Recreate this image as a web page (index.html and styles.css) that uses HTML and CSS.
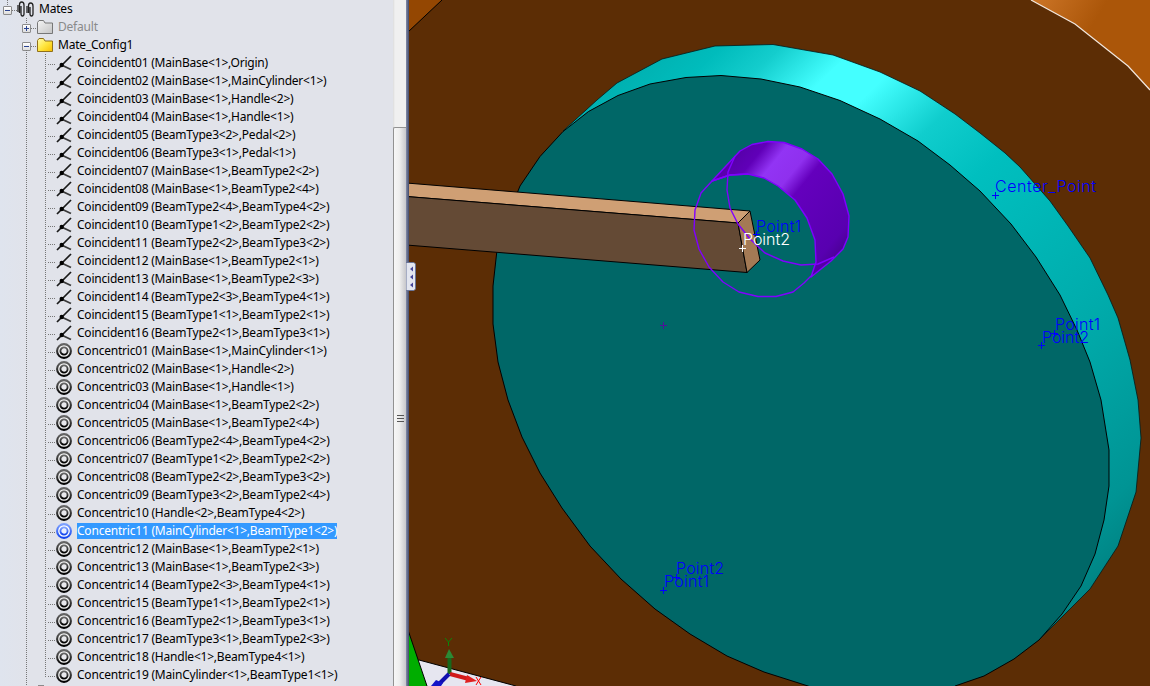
FILE: index.html
```html
<!DOCTYPE html>
<html lang="en">
<head>
<meta charset="utf-8">
<title>Mates</title>
<link rel="stylesheet" href="styles.css">
</head>
<body>
<svg class="defs" width="0" height="0">
  <defs>
    <linearGradient id="gRing" x1="0" y1="0" x2="0" y2="1"><stop offset="0" stop-color="#666"/><stop offset=".6" stop-color="#2c2c2c"/><stop offset="1" stop-color="#000"/></linearGradient>
    <linearGradient id="gBlue" x1="0" y1="0" x2="0" y2="1"><stop offset="0" stop-color="#7fa2ff"/><stop offset="1" stop-color="#1144ee"/></linearGradient>
    <linearGradient id="gYel" x1="0" y1="0" x2="1" y2="1"><stop offset="0" stop-color="#fffbb0"/><stop offset=".5" stop-color="#ffe640"/><stop offset="1" stop-color="#f7bd00"/></linearGradient>
    <linearGradient id="gGry" x1="0" y1="0" x2="1" y2="1"><stop offset="0" stop-color="#f4f4f4"/><stop offset="1" stop-color="#c4c4c4"/></linearGradient>
    <symbol id="coincident" viewBox="0 0 16 16"><path d="M1 15 15 1" stroke="#1a1a1a" stroke-width="1.700"/><path d="M5.500 10 15 14.500" stroke="#3a3a3a" stroke-width="1.900"/><circle cx="5.700" cy="10" r="2.200" fill="#000"/></symbol>
    <symbol id="concentric" viewBox="0 0 16 16"><circle cx="8" cy="8" r="6.900" fill="#f5f5f5" stroke="url(#gRing)" stroke-width="2.100"/><circle cx="8" cy="8" r="3.600" fill="#e8e8ec" stroke="url(#gRing)" stroke-width="1.900"/></symbol>
    <symbol id="concentric-on" viewBox="0 0 16 16"><circle cx="8" cy="8" r="6.900" fill="#fff" stroke="url(#gBlue)" stroke-width="2.100"/><circle cx="8" cy="8" r="3.600" fill="#e8efff" stroke="url(#gBlue)" stroke-width="1.900"/></symbol>
  </defs>
</svg>
<main class="app">
  <section class="tree" id="tree">
    <div class="row root"><i class="box"></i><i class="dots"></i>
      <svg class="clips" viewBox="0 0 17 16"><g fill="none" stroke="#222" stroke-width="1.3"><path d="M2.500 12V4q0-3 2.200-3T7 4v8.500q0 2.500-1.500 2.500T4 12.500V5"/><path d="M1 11V4"/><path d="M11.500 12V5q0-3 2.200-3T16 5v7.500q0 2.500-1.500 2.500T13 12.500V6"/><path d="M10 12V5"/></g></svg>
      <span class="label">Mates</span></div>
    <div class="row folder"><i class="box plus"></i><i class="dots"></i>
      <svg class="dir" viewBox="0 0 17 15"><path d="M.5 13.500V2.500L2 .5H6.500L8 3H15.500V13.500Z" fill="url(#gGry)" stroke="#777"/></svg>
      <span class="label muted">Default</span></div>
    <div class="row folder"><i class="box"></i><i class="dots"></i>
      <svg class="dir" viewBox="0 0 17 15"><path d="M.5 13.500V2.500L2 .5H6.500L8 3H15.500V13.500Z" fill="url(#gYel)" stroke="#90701a"/></svg>
      <span class="label">Mate_Config1</span></div>
  </section>
  <div class="splitter"><div class="thumb"><i></i><i></i><i></i></div></div>
  <section class="viewport">
    <svg class="scene" viewBox="408 0 742 686" width="742" height="686">
      <defs>
        <linearGradient id="rim" gradientUnits="userSpaceOnUse" x1="600" y1="60" x2="1115" y2="600">
          <stop offset="0" stop-color="#00aaaa"/><stop offset=".1" stop-color="#00bcbc"/><stop offset=".155" stop-color="#14cdcd"/><stop offset=".225" stop-color="#44ffff"/><stop offset=".28" stop-color="#44ffff"/><stop offset=".37" stop-color="#10cdcd"/><stop offset=".46" stop-color="#00bfbf"/><stop offset=".7" stop-color="#00abab"/><stop offset=".9" stop-color="#009494"/><stop offset="1" stop-color="#007c7c"/>
        </linearGradient>
        <linearGradient id="pin" gradientUnits="userSpaceOnUse" x1="715" y1="160" x2="850" y2="270">
          <stop offset="0" stop-color="#5000a0"/><stop offset=".17" stop-color="#6000b8"/><stop offset=".27" stop-color="#9234f4"/><stop offset=".39" stop-color="#8f30ee"/><stop offset=".48" stop-color="#6400bd"/><stop offset=".82" stop-color="#5800b0"/><stop offset="1" stop-color="#3c0078"/>
        </linearGradient>
        <linearGradient id="bronze" gradientUnits="userSpaceOnUse" x1="1040" y1="0" x2="1090" y2="30"><stop offset="0" stop-color="#c97224"/><stop offset="1" stop-color="#ab5609"/></linearGradient>
      </defs>
      <rect x="408" width="742" height="686" fill="#5c2d05"/>
      <path d="M1031 0 1075 24 1128 66 1150 90V0Z" fill="url(#bronze)"/>
      <path d="M1031 0 1075 24 1128 66 1150 90" fill="none" stroke="#f2e8e0" stroke-width="1.200"/>
      <path d="M408 0H442L408 32Z" fill="#944702"/><path d="M442 0 408 32" stroke="#000"/>
      <path d="M419 660 516 686H400Z" fill="#e6e6f0"/><path d="M419 660 516 686" stroke="#000"/>
      <path d="M408 630 427 686H408Z" fill="#00ad00"/><path d="M408 630 427 686" stroke="#000"/>
      <path d="M563 131 597 100 617 83 662 59 715 46 773 44.500 833 55 880 72 920 91 955 114 980 133 1005 153 1020 167 1050 201 1068 226 1090 258 1108 295 1118 318 1130 360 1138 400 1141 438 1136 492 1118 546 1090 589 1072 607 1039 640 900 400Z" fill="url(#rim)" stroke="#001a1a" stroke-width=".8"/>
      <path class="face" d="M518 191 520 186 540 156.500 563 131.500 588.500 111.500 618 95.500 650 84 686 77.500 721 75.500 761 79 800 87 840 100.500 880 119 918 141 950 165 980 191 1011 224 1036 257 1060 295 1077 330 1090 362 1101 400 1109 450V486L1104 520 1095 554 1081 586 1062 614 1039 640 1014 659 984 676 955 686 952 690H818L808 686 764 672 727 656 690 634 655 609 621 579 590 546 562 508 540 473 522 437 508 400 498 362 493 324V286L497 250Z"/>
      <g stroke="#000" stroke-linejoin="round">
        <path d="M400 182.500 750 211 738 223 400 196Z" fill="#cf9f74"/>
        <path d="M400 196 738 223 747 272.500 400 244.500Z" fill="#644a35"/>
        <path d="M738 223 750 211 760 260 747 272.500Z" fill="#a47a55"/>
      </g>
      <g stroke="#8000ff" stroke-width="1.400" fill="none" stroke-linejoin="round">
        <path d="M712 181 740 151 752 144.500 768 141.500 784 142.500 802 149 818 159 832 174 843 194 849 216 848 237 843 249 831 261 811 277 816 262 815 240 807 218 795 200 778 186 764 178 748 174 730 175Z" fill="url(#pin)"/>
        <path d="M748 174 730 175 712 181 701 193 695 210 694 230 699 249 709 267 723 282 739 292 758 296.500 776 296.500 793 292 804 283 811 276"/>
        <path d="M735 156 728 172 727 190 730 208 738 224 750 239 765 253 783 261 801 265 818 264 834 257"/>
      </g>
      <path class="origin" d="M660 325.500h7M663.500 322v7"/>
      <g class="blue pt">
        <path d="M992 195.500h7M995.500 192v7M1038 345.500h7M1041.500 342v7M1051 333.500h7M1054.500 330v7M673 577.500h7M676.500 574v7M660 590.500h7M663.500 587v7M753 234.500h7M756.500 231v7"/>
        <text x="995" y="192" textLength="101">Center_Point</text>
        <text x="1055" y="330" textLength="45">Point1</text><text x="1042" y="343" textLength="47">Point2</text>
        <text x="676" y="574" textLength="48">Point2</text><text x="664" y="587" textLength="45">Point1</text>
        <text x="756" y="232" textLength="45">Point1</text>
      </g>
      <g class="white pt"><path d="M739 248.500h7M742.500 245v7"/><text x="743" y="245" textLength="47">Point2</text></g>
      <g>
        <path d="M449.500 674V656" stroke="#17691c" stroke-width="4"/><path d="M449 649 454 658H445Z" fill="#2b8a35"/>
        <path d="M450 674 469 679" stroke="#d21a1a" stroke-width="4"/><path d="M467 675 477 681 465 683Z" fill="#e02020"/>
        <path d="M449 674 440 683" stroke="#1010b0" stroke-width="4"/><path d="M431 686 436 680 443 683 441 686Z" fill="#1414c8"/>
        <path d="M445 638 448.500 642V646M452 638 448.500 642" stroke="#0a850a" fill="none"/>
        <path d="M476 677 481 685M481 677 476 685" stroke="#f00"/>
      </g>
    </svg>
    <div class="handle"><svg viewBox="0 0 10 29" width="10" height="29"><path d="M0 .5H8L9.500 2V27L8 28.500H0Z" fill="#e3e6f0" stroke="#6b7597"/><path d="M4 7 7 4.500V9.500ZM4 15 7 12.500V17.500ZM4 23 7 20.500V25.500Z" fill="#45459a"/></svg></div>
  </section>
</main>
<script src="tree.js"></script>
</body>
</html>
```
FILE: styles.css
```css
* { box-sizing: border-box; }
body { margin: 0; overflow: hidden; font: 12px/16px "Noto Sans", "Open Sans", sans-serif; color: #000; }
.defs { position: absolute; }
.app { display: flex; width: 1150px; height: 686px; }
.tree { position: relative; width: 393px; height: 686px; overflow: hidden; background: linear-gradient(90deg, #dfe4ee, #e1e3ea 30px); }
.row { display: flex; align-items: center; height: 18px; padding-left: 48px; white-space: nowrap; }
.root { padding-left: 3px; }
.folder { padding-left: 22px; }
.box { position: relative; flex: none; width: 9px; height: 9px; border: 1px solid #8c8c8c; border-radius: 1px; background: linear-gradient(#fff, #ddd); margin-top: 2px; }
.box::before, .plus::after { content: ""; position: absolute; left: 1px; top: 3px; width: 5px; height: 1px; background: #2a4390; }
.plus::after { transform: rotate(90deg); }
.dots { flex: none; width: 5px; height: 1px; margin-top: 3px; background: repeating-linear-gradient(90deg, #777 0 1px, transparent 1px 2px); }
.leaf .dots { width: 8px; }
.leaf .icon { flex: none; width: 16px; height: 16px; }
.leaf .icon + .label { margin-left: 5px; }
.clips { width: 17px; height: 16px; }
.clips + .label { margin-left: 5px; }
.dir { width: 17px; height: 15px; margin-left: 1px; }
.dir + .label { margin-left: 4px; }
.label { height: 16px; line-height: 15px; letter-spacing: -0.21px; }
.muted { color: #8a8a8a; }
.selected .label { background: #3399ff; color: #fff; }
.guide { position: absolute; width: 1px; background: repeating-linear-gradient(#777 0 1px, transparent 1px 2px); }
.guide-start { left: 7px; top: 0; height: 5px; }
.guide-top { left: 26px; top: 18px; height: 5px; }
.guide-root { left: 26px; top: 50px; bottom: 0; }
.guide-leaf { left: 45px; top: 54px; height: 623px; }
.next-folder { position: absolute; left: 38px; bottom: 0; width: 6px; height: 1px; background: #8a8a8a; }
.splitter { flex: none; width: 16px; height: 686px; padding-top: 127px; background: linear-gradient(90deg, #dcdcdc, #f0f0f0 2px, #f0f0f0 13px, #858da8 13px, #40486a); }
.thumb { display: flex; flex-direction: column; align-items: center; justify-content: center; gap: 2px; width: 13px; height: 559px; padding-top: 22px; border: 1px solid #929292; border-right: 0; border-bottom: 0; border-radius: 2px 0 0 0; background: linear-gradient(90deg, #f7f7f7, #eee 45%, #c7c7cb); }
.thumb i { width: 7px; height: 1px; background: #555; }
.viewport { position: relative; width: 741px; height: 686px; }
.scene { display: block; margin-left: -1px; clip-path: inset(0 0 0 1px); }
.face { fill: #006767; stroke: #000; }
.handle { position: absolute; left: -3px; top: 262px; width: 10px; height: 29px; }
.pt { font: 16px "Inter", sans-serif; font-weight: 300; }
.blue { fill: #0000ff; }
.white { fill: #fff; }
.blue path { stroke: #0000ff; }
.white path { stroke: #fff; }
.origin { stroke: #50109a; }
```
FILE: tree.js
```js
const coincident = ["MainBase<1>,Origin", "MainBase<1>,MainCylinder<1>", "MainBase<1>,Handle<2>", "MainBase<1>,Handle<1>", "BeamType3<2>,Pedal<2>", "BeamType3<1>,Pedal<1>", "MainBase<1>,BeamType2<2>", "MainBase<1>,BeamType2<4>", "BeamType2<4>,BeamType4<2>", "BeamType1<2>,BeamType2<2>", "BeamType2<2>,BeamType3<2>", "MainBase<1>,BeamType2<1>", "MainBase<1>,BeamType2<3>", "BeamType2<3>,BeamType4<1>", "BeamType1<1>,BeamType2<1>", "BeamType2<1>,BeamType3<1>"];
const concentric = ["MainBase<1>,MainCylinder<1>", "MainBase<1>,Handle<2>", "MainBase<1>,Handle<1>", "MainBase<1>,BeamType2<2>", "MainBase<1>,BeamType2<4>", "BeamType2<4>,BeamType4<2>", "BeamType1<2>,BeamType2<2>", "BeamType2<2>,BeamType3<2>", "BeamType3<2>,BeamType2<4>", "Handle<2>,BeamType4<2>", "MainCylinder<1>,BeamType1<2>", "MainBase<1>,BeamType2<1>", "MainBase<1>,BeamType2<3>", "BeamType2<3>,BeamType4<1>", "BeamType1<1>,BeamType2<1>", "BeamType2<1>,BeamType3<1>", "BeamType3<1>,BeamType2<3>", "Handle<1>,BeamType4<1>", "MainCylinder<1>,BeamType1<1>"];
const tree = document.getElementById("tree");

function addMates(kind, list, selected) {
  list.forEach((parts, i) => {
    const row = document.createElement("div");
    const on = i === selected;
    row.className = "row leaf" + (on ? " selected" : "");
    row.innerHTML = `<i class="dots"></i><svg class="icon"><use href="#${kind.toLowerCase()}${on ? "-on" : ""}"/></svg><span class="label"></span>`;
    row.querySelector(".label").textContent = `${kind}${String(i + 1).padStart(2, "0")} (${parts})`;
    tree.append(row);
  });
}

addMates("Coincident", coincident, -1);
addMates("Concentric", concentric, 10);
for (const name of ["guide guide-start", "guide guide-top", "guide guide-root", "guide guide-leaf", "next-folder"]) {
  const mark = document.createElement("div");
  mark.className = name;
  tree.append(mark);
}
```
